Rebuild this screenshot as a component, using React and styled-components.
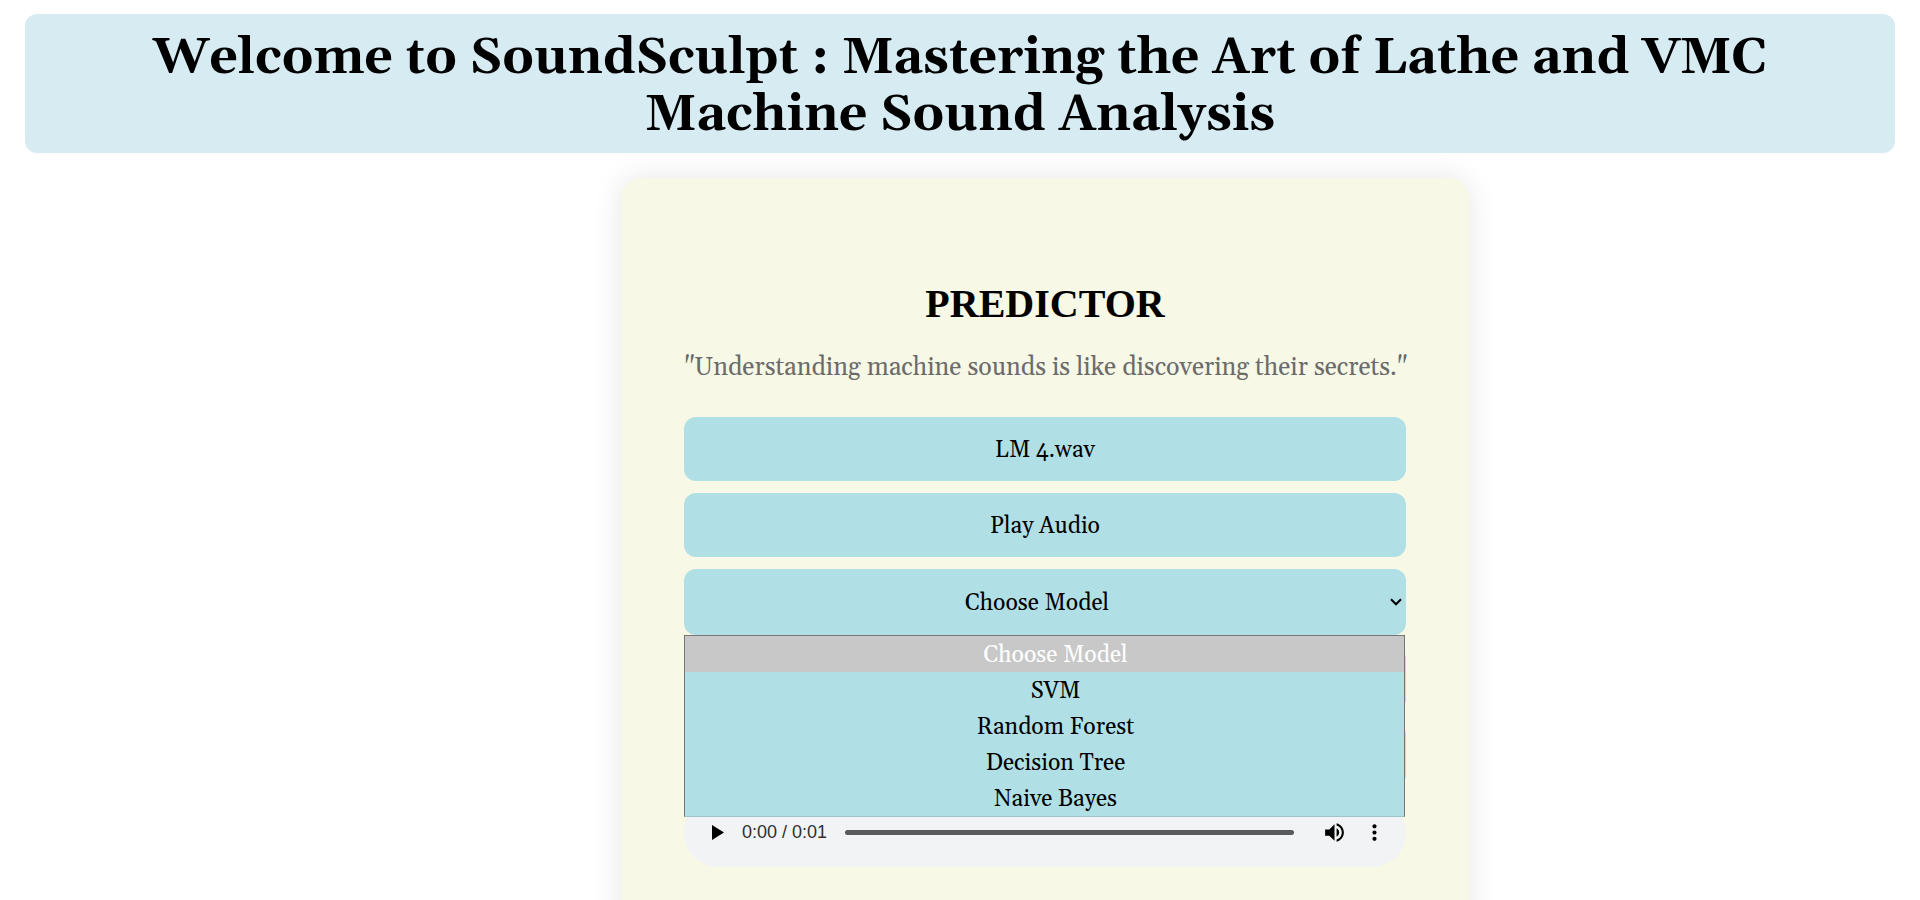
import React from 'react';
import styled, { createGlobalStyle } from 'styled-components';

const serif = "Georgia, Gelasio, 'Liberation Serif', serif";

const GlobalStyle = createGlobalStyle`
  * { box-sizing: border-box; }
  html { scrollbar-width: none; }
  body { margin: 0; background: #fff; color: #000; font-family: ${serif}; }
`;

const Page = styled.div`
  display: flex;
  flex-direction: column;
  gap: 25px;
  padding: 14px 25px 0;
`;

const Banner = styled.header`
  padding: 16px 12px 9px;
  border-radius: 12px;
  background: #d7ebf2;
`;

const Title = styled.h1`
  margin: 0;
  font-size: 50px;
  line-height: 57px;
  text-align: center;
`;

const Main = styled.main`
  display: flex;
  justify-content: center;
  padding-left: 170px;
`;

const Card = styled.section`
  display: flex;
  flex-direction: column;
  width: 848px;
  padding: 98px 63px;
  border-radius: 20px;
  background: #f7f8e5;
  box-shadow: 0 0 30px rgba(0, 0, 0, 0.1);
`;

const Heading = styled.h2`
  margin: 0;
  font-family: 'Liberation Serif', serif;
  font-size: 40px;
  line-height: 56px;
  text-align: center;
`;

const Quote = styled.p`
  margin: 21px 0 33px;
  font-size: 25px;
  line-height: 31px;
  color: #6b6b6b;
  text-align: center;
  white-space: nowrap;
`;

const Controls = styled.div`
  display: flex;
  flex-direction: column;
  gap: 12px;
`;

const ActionButton = styled.button`
  height: 64px;
  padding: 2px 20px 0;
  border: 0;
  border-radius: 12px;
  background: #b0e0e6;
  color: #000;
  font-family: inherit;
  font-size: 23px;
`;

const ModelPicker = styled.div`
  position: relative;
  display: flex;
  align-items: center;
`;

const ModelSelect = styled.select`
  width: 100%;
  height: 66px;
  padding: 2px 36px 0 20px;
  border: 0;
  border-radius: 12px;
  outline: 0;
  appearance: none;
  background: #b0e0e6;
  color: #000;
  font-family: inherit;
  font-size: 23px;
  text-align: center;
  text-align-last: center;
`;

const Chevron = styled.svg`
  position: absolute;
  right: 4px;
  width: 12px;
  height: 8px;
  pointer-events: none;
`;

const Menu = styled.ul`
  position: absolute;
  z-index: 1;
  top: 100%;
  left: 0;
  right: 1px;
  margin: 0;
  padding: 0;
  border: 1px solid #767676;
  border-bottom-color: #9cc4c9;
  background: #b0e0e6;
  list-style: none;
`;

const MenuItem = styled.li`
  height: 36px;
  padding-left: 22px;
  background: ${(p) => (p.$active ? '#c8c8c8' : 'transparent')};
  color: ${(p) => (p.$active ? '#fff' : '#000')};
  font-size: 23px;
  line-height: 40px;
  text-align: center;
`;

const CoveredRow = styled.div`
  height: 64px;
  border-radius: 12px;
  background: #b0e0e6;
`;

const Player = styled.div`
  display: flex;
  align-items: center;
  height: 68px;
  padding: 0 12px 2px 18px;
  border-radius: 34px;
  background: #f1f3f4;
`;

const IconButton = styled.button`
  display: flex;
  align-items: center;
  justify-content: center;
  width: ${(p) => p.$width}px;
  height: 32px;
  padding: 0;
  border: 0;
  background: none;
  color: #000;
`;

const Time = styled.span`
  margin: 0 18px 0 8px;
  font-family: 'Liberation Sans', sans-serif;
  font-size: 18px;
  color: #303030;
`;

const Seek = styled.input`
  flex: 1;
  min-width: 0;
  height: 5px;
  margin: 0 20px 0 0;
  border-radius: 3px;
  appearance: none;
  background: #5a5a5a;
  &::-webkit-slider-thumb { appearance: none; width: 0; height: 0; }
`;

const models = ['Choose Model', 'SVM', 'Random Forest', 'Decision Tree', 'Naive Bayes'];

export default function App() {
  return (
    <>
      <GlobalStyle />
      <Page>
        <Banner>
          <Title>Welcome to SoundSculpt : Mastering the Art of Lathe and VMC Machine Sound Analysis</Title>
        </Banner>
        <Main>
          <Card>
            <Heading>PREDICTOR</Heading>
            <Quote>"Understanding machine sounds is like discovering their secrets."</Quote>
            <Controls>
              <ActionButton type="button">LM 4.wav</ActionButton>
              <ActionButton type="button">Play Audio</ActionButton>
              <ModelPicker>
                <ModelSelect aria-label="Choose Model" defaultValue="Choose Model">
                  {models.map((m) => <option key={m}>{m}</option>)}
                </ModelSelect>
                <Chevron viewBox="0 0 12 8" fill="none" stroke="#000" strokeWidth="2">
                  <path d="M1 1.3 6 6.3 11 1.3" />
                </Chevron>
                <Menu role="listbox" aria-label="Choose Model">
                  {models.map((m, i) => (
                    <MenuItem key={m} role="option" aria-selected={i === 0} $active={i === 0}>{m}</MenuItem>
                  ))}
                </Menu>
              </ModelPicker>
              <CoveredRow />
              <CoveredRow />
              <Player>
                <IconButton type="button" aria-label="Play" $width={32}>
                  <svg width="12" height="15" viewBox="0 0 12 15"><path d="M0 0v15l12-7.5z" /></svg>
                </IconButton>
                <Time>0:00 / 0:01</Time>
                <Seek type="range" aria-label="Seek" min="0" max="1" defaultValue="0" />
                <IconButton type="button" aria-label="Mute" $width={40}>
                  <svg width="25" height="25" viewBox="0 0 24 24">
                    <path d="M3 9v6h4l5 5V4L7 9H3zm13.5 3c0-1.77-1.02-3.29-2.5-4.03v8.05c1.48-.73 2.5-2.25 2.5-4.02zM14 3.23v2.06c2.89.86 5 3.54 5 6.71s-2.11 5.85-5 6.71v2.06c4.01-.91 7-4.49 7-8.77s-2.99-7.86-7-8.77z" />
                  </svg>
                </IconButton>
                <IconButton type="button" aria-label="More options" $width={40}>
                  <svg width="25" height="25" viewBox="0 0 24 24">
                    <path d="M12 8c1.1 0 2-.9 2-2s-.9-2-2-2-2 .9-2 2 .9 2 2 2zm0 2c-1.1 0-2 .9-2 2s.9 2 2 2 2-.9 2-2-.9-2-2-2zm0 6c-1.1 0-2 .9-2 2s.9 2 2 2 2-.9 2-2-.9-2-2-2z" />
                  </svg>
                </IconButton>
              </Player>
            </Controls>
          </Card>
        </Main>
      </Page>
    </>
  );
}
